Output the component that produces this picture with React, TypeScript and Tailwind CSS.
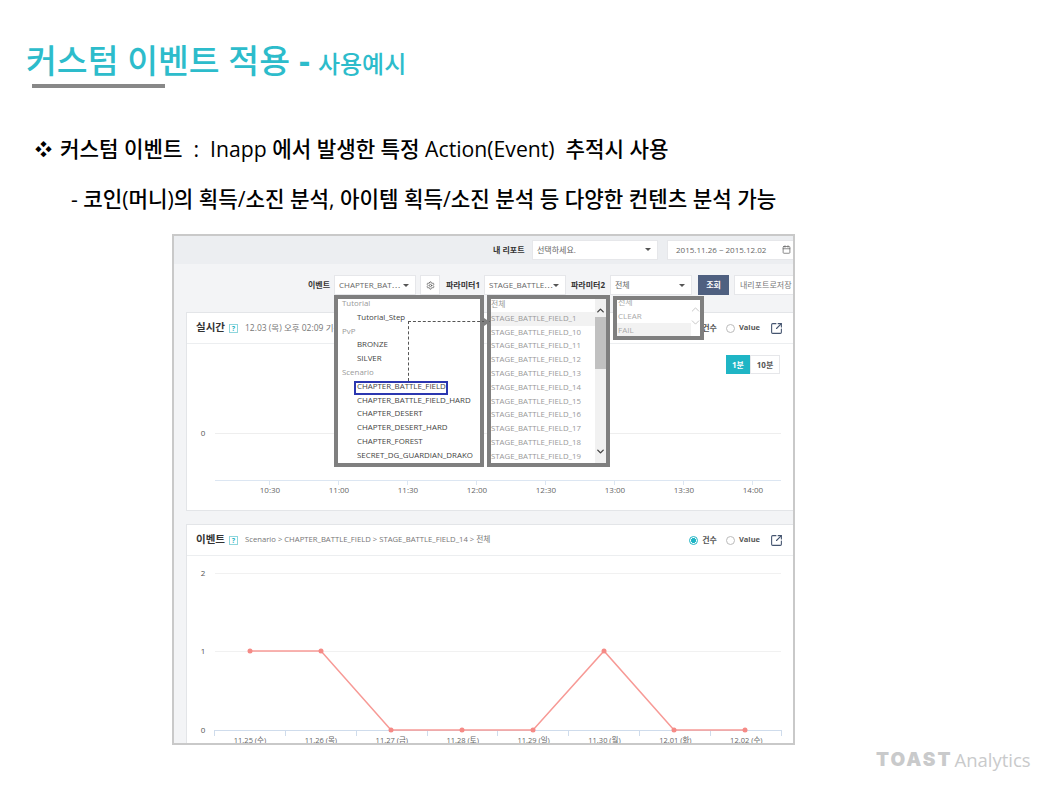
import { ChevronDown, ChevronUp, Settings, Calendar, SquareArrowOutUpRight } from 'lucide-react';

const KR = { fontFamily: '"Open Sans", "Noto Sans CJK KR", sans-serif' };

const tutorialItems = ['BRONZE', 'SILVER'];
const scenarioItems = ['CHAPTER_BATTLE_FIELD', 'CHAPTER_BATTLE_FIELD_HARD', 'CHAPTER_DESERT', 'CHAPTER_DESERT_HARD', 'CHAPTER_FOREST', 'SECRET_DG_GUARDIAN_DRAKO'];
const stageItems = ['1', '10', '11', '12', '13', '14', '15', '16', '17', '18', '19'];
const timeLabels = ['10:30', '11:00', '11:30', '12:00', '12:30', '13:00', '13:30', '14:00'];
const dayLabels = ['11.25 (수)', '11.26 (목)', '11.27 (금)', '11.28 (토)', '11.29 (일)', '11.30 (월)', '12.01 (화)', '12.02 (수)'];
const points = [[250, 79], [321, 79], [391, 158], [462, 158], [533, 158], [604, 79], [674, 158], [745, 158]];

function Caret() {
  return <span className="h-0 w-0 shrink-0 border-x-[3px] border-t-[3px] border-x-transparent border-t-[#555]" />;
}

function Select({ label, className }: { label: string; className: string }) {
  return (
    <div className={`flex h-5 shrink-0 items-center justify-between border border-[#e6e7ea] bg-white pl-[4px] pr-[6px] text-[8px] text-[#666] ${className}`}>
      <span className="whitespace-nowrap">{label}</span>
      <Caret />
    </div>
  );
}

function Help() {
  return <span className="flex h-[9px] w-[9px] shrink-0 items-center justify-center border border-[#8fd6dc] text-[7px] font-bold leading-none text-[#1fb5c5]">?</span>;
}

function PanelHeader({ title, sub, subClass }: { title: string; sub: string; subClass: string }) {
  return (
    <div className="flex h-[31px] items-center border-b border-[#eceef0] pl-[9px]">
      <span className="mr-[4px] text-[10.5px] font-bold text-[#333]">{title}</span>
      <Help />
      <span className={`ml-[7px] whitespace-nowrap text-[#777] ${subClass}`}>{sub}</span>
      <div className="ml-auto flex items-center pr-[10px]">
        <span className="h-[9px] w-[9px] rounded-full border border-[#1fb5c5] bg-[radial-gradient(circle,#1fb5c5_45%,#fff_50%)]" />
        <span className="ml-[4px] text-[8px] font-bold text-[#555]">건수</span>
        <span className="ml-[9px] h-[9px] w-[9px] rounded-full border border-[#bbb] bg-white" />
        <span className="ml-[4px] text-[7.5px] font-bold text-[#555]">Value</span>
        <SquareArrowOutUpRight size={13} strokeWidth={2} className="ml-[10px] text-[#44546f]" />
      </div>
    </div>
  );
}

export default function App() {
  return (
    <div className="h-[792px] w-[1052px] overflow-hidden bg-white" style={KR}>
      <div className="relative pl-[26px] pt-[36px]">
        <h1 className="flex h-[44px] items-baseline whitespace-nowrap pt-[2px] text-[33.5px] font-medium leading-[44px] text-[#2dbccb]">
          커스텀 이벤트 적용
          <span className="ml-[9px] text-[34px] font-bold leading-none">-</span>
          <span className="ml-[8px] text-[24px] leading-none">사용예시</span>
        </h1>
        <div className="ml-[6px] mt-[4px] h-1 w-[133px] bg-[#888888]" />
      </div>

      <div className="mt-[47px] flex h-[28px] items-center whitespace-nowrap pl-[35px] text-[21.2px] font-medium text-black">
        <span className="w-[25px] text-[17px] leading-none">❖</span>
        <span>커스텀 이벤트 &nbsp;:&nbsp; Inapp 에서 발생한 특정 Action(Event) &nbsp;추적시 사용</span>
      </div>
      <div className="mt-[22px] flex h-[28px] items-center whitespace-nowrap pl-[71px] text-[21.2px] font-medium text-black">
        - 코인(머니)의 획득/소진 분석, 아이템 획득/소진 분석 등 다양한 컨텐츠 분석 가능
      </div>

      <div className="relative ml-[172px] mt-[21px] h-[511px] w-[623px] overflow-hidden border-2 border-[#c9c9c9] bg-[#f3f4f6]">
        <div className="flex h-[28px] items-center bg-[#eceef1] pb-[1px] pl-[319px]">
          <span className="w-[39px] shrink-0 whitespace-nowrap text-[8px] font-bold text-[#333]">내 리포트</span>
          <Select label=" 선택하세요." className="w-[126px]" />
          <div className="ml-[9px] flex h-5 w-[128px] shrink-0 items-center justify-between border border-[#e6e7ea] bg-white pl-[8px] pr-[3px] text-[8px] text-[#666]">
            <span className="whitespace-nowrap">2015.11.26 ~ 2015.12.02</span>
            <Calendar size={9} className="text-[#666]" />
          </div>
        </div>

        <div className="flex h-[36px] items-center whitespace-nowrap pl-[134px] pt-[6px]">
          <span className="w-[26px] shrink-0 text-[8px] font-bold text-[#333]">이벤트</span>
          <Select label="CHAPTER_BAT⋯" className="w-[82px]" />
          <div className="ml-[4px] flex h-5 w-5 shrink-0 items-center justify-center border border-[#e6e7ea] bg-white">
            <Settings size={9} className="text-[#555]" />
          </div>
          <span className="ml-[6px] w-[38px] shrink-0 text-[8px] font-bold text-[#333]">파라미터1</span>
          <Select label="STAGE_BATTLE⋯" className="w-[82px]" />
          <span className="ml-[5px] w-[39px] shrink-0 text-[8px] font-bold text-[#333]">파라미터2</span>
          <Select label="전체" className="w-[82px]" />
          <div className="ml-[6px] flex h-5 w-[31px] shrink-0 items-center justify-center bg-[#4f6080] text-[8px] font-bold text-white">조회</div>
          <div className="ml-[5px] flex h-5 w-[70px] shrink-0 items-center border border-[#e6e7ea] bg-white pl-[5px] text-[8px] text-[#777]">내리포트로저장</div>
        </div>

        <div className="ml-[12px] mt-[12px] h-[199px] border border-r-0 border-[#e3e5e8] bg-white">
          <PanelHeader title="실시간" sub="12.03 (목) 오후 02:09 기준" subClass="text-[8.5px]" />
          <div className="flex justify-end pr-[13px] pt-[11px]">
            <div className="flex h-[19px] w-[24px] items-center justify-center bg-[#1fb5c5] text-[8px] font-bold text-white">1분</div>
            <div className="flex h-[19px] w-[30px] items-center justify-center border border-[#e6e7ea] text-[8px] font-bold text-[#555]">10분</div>
          </div>
          <svg width="608" height="136" viewBox="187 374 608 136" className="block">
            <line x1="215" x2="781" y1="433.5" y2="433.5" stroke="#eeeeee" />
            <line x1="215" x2="781" y1="480.5" y2="480.5" stroke="#dce6f2" />
            <text x="203" y="436" fontSize="8" textAnchor="middle" fill="#555">0</text>
            {timeLabels.map((t, i) => (
              <g key={t}>
                <line x1={269.5 + i * 69} x2={269.5 + i * 69} y1="480" y2="485" stroke="#dce6f2" />
                <text x={270 + i * 69} y="493" fontSize="8" textAnchor="middle" fill="#666">{t}</text>
              </g>
            ))}
          </svg>
        </div>

        <div className="ml-[12px] mt-[13px] h-[240px] border border-r-0 border-[#e3e5e8] bg-white">
          <PanelHeader title="이벤트" sub="Scenario > CHAPTER_BATTLE_FIELD > STAGE_BATTLE_FIELD_14 > 전체" subClass="text-[7.7px]" />
          <svg width="608" height="189" viewBox="187 556 608 189" className="block">
            <g transform="translate(0 572)">
              <line x1="215" x2="781" y1="1.5" y2="1.5" stroke="#f1f1f1" />
              <line x1="215" x2="781" y1="79.5" y2="79.5" stroke="#f1f1f1" />
              <line x1="214" x2="781" y1="158.5" y2="158.5" stroke="#cfdcec" />
              <text x="203" y="4" fontSize="8" textAnchor="middle" fill="#555">2</text>
              <text x="203" y="82" fontSize="8" textAnchor="middle" fill="#555">1</text>
              <text x="203" y="161" fontSize="8" textAnchor="middle" fill="#555">0</text>
              {[214.5, 285.5, 356.5, 427.5, 497.5, 568.5, 639.5, 710.5, 781.5].map(x => (
                <line key={x} x1={x} x2={x} y1="158" y2="164" stroke="#cfdcec" />
              ))}
              {dayLabels.map((d, i) => (
                <text key={d} x={250 + i * 70.9} y="171" fontSize="7.5" textAnchor="middle" fill="#666">{d}</text>
              ))}
              <polyline points={points.map(p => p.join(',')).join(' ')} fill="none" stroke="#f79a96" strokeWidth="1.5" />
              {points.map(p => <circle key={p[0]} cx={p[0]} cy={p[1]} r="2.5" fill="#f58a86" />)}
            </g>
          </svg>
        </div>

        {/* event dropdown */}
        <div className="absolute left-[160px] top-[59px] h-[172px] w-[150px] overflow-hidden border-4 border-[#7f7f7f] bg-white text-[7.9px] leading-[13.8px] text-[#444]">
          <div className="-mt-[2px] pl-[4px] text-[#999]">Tutorial</div>
          <div className="pl-[19px]">Tutorial_Step</div>
          <div className="pl-[4px] text-[#999]">PvP</div>
          {tutorialItems.map(item => <div key={item} className="pl-[19px]">{item}</div>)}
          <div className="pl-[4px] text-[#999]">Scenario</div>
          {scenarioItems.map(item => <div key={item} className="whitespace-nowrap pl-[19px]">{item}</div>)}
        </div>
        <div className="absolute left-[180px] top-[145px] h-[14px] w-[94px] border-2 border-[#2b37b0]" />

        {/* parameter 1 dropdown */}
        <div className="absolute left-[313px] top-[59px] h-[172px] w-[123px] overflow-hidden border-4 border-[#7f7f7f] bg-white text-[7.8px] leading-[13.8px] text-[#999]">
          <div className="flex h-full">
            <div className="-mt-[1px] min-w-0 flex-1">
              <div>전체</div>
              {stageItems.map(n => (
                <div key={n} className={`whitespace-nowrap ${n === '1' ? 'bg-[#f2f2f2]' : ''}`}>STAGE_BATTLE_FIELD_{n}</div>
              ))}
            </div>
            <div className="flex w-[11px] flex-col items-center bg-[#f1f1f1]">
              <ChevronUp size={11} strokeWidth={3} className="mt-[6px] text-[#444]" />
              <div className="mt-[1px] h-[52px] w-full bg-[#c1c1c1]" />
              <ChevronDown size={11} strokeWidth={3} className="mb-[6px] mt-auto text-[#444]" />
            </div>
          </div>
        </div>

        {/* parameter 2 dropdown */}
        <div className="absolute left-[439px] top-[60px] h-[44px] w-[91px] overflow-hidden border-4 border-[#7f7f7f] bg-white text-[8px] leading-[14px] text-[#aaa]">
          <div className="flex h-full">
            <div className="-mt-[5px] min-w-0 flex-1">
              <div className="pl-[1px]">전체</div>
              <div className="pl-[1px]">CLEAR</div>
              <div className="bg-[#f2f2f2] pl-[1px]">FAIL</div>
            </div>
            <div className="flex w-[9px] flex-col items-center">
              <ChevronUp size={13} strokeWidth={1.5} className="mt-[3px] shrink-0 text-[#bbb]" />
              <ChevronDown size={13} strokeWidth={1.5} className="shrink-0 text-[#bbb]" />
            </div>
          </div>
        </div>

        {/* dashed connector */}
        <div className="absolute left-[234px] top-[85px] h-[60px] w-[82px] border-l border-t border-dashed border-[#555]" />
        <div className="absolute left-[310px] top-[82px] h-0 w-0 border-y-[4px] border-l-[6px] border-y-transparent border-l-[#7f7f7f]" />
      </div>

      <div className="absolute left-[876px] top-[748px] flex h-[24px] items-center whitespace-nowrap text-[#c9cacb]">
        <span className="text-[19px] font-black tracking-[2px]" style={{ fontFamily: '"Inter", sans-serif' }}>TOAST</span>
        <span className="ml-[2px] text-[18.5px]" style={{ fontFamily: '"Open Sans", sans-serif' }}>Analytics</span>
      </div>
    </div>
  );
}
